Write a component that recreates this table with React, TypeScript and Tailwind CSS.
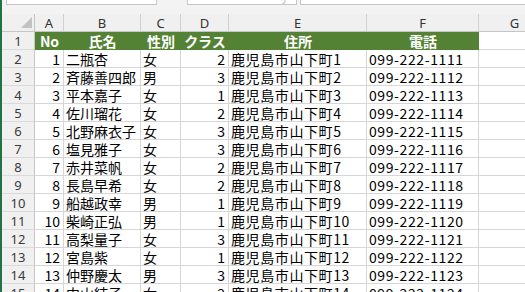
import React from "react";

type Person = { name: string; sex: string; cls: number };

const people: Person[] = [
  { name: "二瓶杏", sex: "女", cls: 2 },
  { name: "斉藤善四郎", sex: "男", cls: 3 },
  { name: "平本嘉子", sex: "女", cls: 1 },
  { name: "佐川瑠花", sex: "女", cls: 2 },
  { name: "北野麻衣子", sex: "女", cls: 3 },
  { name: "塩見雅子", sex: "女", cls: 3 },
  { name: "赤井菜帆", sex: "女", cls: 2 },
  { name: "長島早希", sex: "女", cls: 2 },
  { name: "船越政幸", sex: "男", cls: 1 },
  { name: "柴崎正弘", sex: "男", cls: 1 },
  { name: "高梨量子", sex: "女", cls: 3 },
  { name: "宮島紫", sex: "女", cls: 1 },
  { name: "仲野慶太", sex: "男", cls: 3 },
  { name: "中山結子", sex: "女", cls: 2 },
];

const W = {
  A: "w-[29px]",
  B: "w-[77px]",
  C: "w-[40px]",
  D: "w-[48px]",
  E: "w-[138px]",
  F: "w-[112px]",
  G: "w-[72px]",
};

const cellFont = { fontFamily: '"Noto Sans CJK JP", sans-serif' };
const uiFont = { fontFamily: '"Noto Sans", "Liberation Sans", sans-serif' };

function RowHead({ children }: { children: React.ReactNode }) {
  return (
    <div
      className="w-[33px] shrink-0 h-[18px] bg-[#f0f0f0] border-r border-r-[#c6c6c6] border-b border-b-[#dadada] flex items-center justify-center text-[13px] leading-[16px] text-[#3a3a3a]"
      style={uiFont}
    >
      {children}
    </div>
  );
}

function ColHead({ w, label }: { w: string; label: string }) {
  return (
    <div
      className={`${w} shrink-0 h-[18px] bg-[#f0f0f0] border-r border-[#d0d0d0] border-b border-b-[#c6c6c6] flex items-center justify-center text-[13px] leading-[16px] text-[#333]`}
      style={uiFont}
    >
      {label}
    </div>
  );
}

function Cell({
  w,
  align = "left",
  spacing = "",
  children,
}: {
  w: string;
  align?: "left" | "right";
  spacing?: string;
  children?: React.ReactNode;
}) {
  return (
    <div
      className={`${w} shrink-0 h-[18px] border-r border-b border-[#d6d6d6] flex items-center overflow-hidden whitespace-nowrap text-[14px] leading-[16px] text-black ${spacing} ${
        align === "right" ? "justify-end pr-[3px]" : "justify-start pl-[2px]"
      }`}
      style={cellFont}
    >
      {children}
    </div>
  );
}

function HeadCell({ w, children }: { w: string; children?: React.ReactNode }) {
  return (
    <div
      className={`${w} shrink-0 h-[18px] bg-[#548235] flex items-center justify-center text-[14px] font-bold leading-[16px] text-white overflow-hidden whitespace-nowrap`}
      style={cellFont}
    >
      {children}
    </div>
  );
}

export default function App() {
  return (
    <div className="w-[525px] h-[292px] overflow-hidden flex bg-white">
      <div className="w-[2px] shrink-0 bg-[#217346]" />
      <div className="flex-1 flex flex-col overflow-hidden">
        {/* formula bar strip */}
        <div className="h-[14px] shrink-0 bg-[#f3f3f3] flex items-start">
          <div className="ml-[4px] w-[151px] h-[5px] bg-white border-x border-b border-[#c6c6c6]" />
          <div className="ml-[30px] w-[110px] h-[5px] bg-white border-x border-b border-[#c6c6c6] overflow-hidden relative">
            <span
              className="absolute left-[80px] top-[-12px] text-[14px] italic text-[#c8c8c8] leading-none"
              style={uiFont}
            >
              ✓ fx
            </span>
          </div>
          <div className="ml-[3px] flex-1 h-[5px] bg-white border-l border-b border-[#c6c6c6]" />
        </div>

        {/* column letters */}
        <div className="flex shrink-0">
          <div className="w-[33px] shrink-0 h-[18px] bg-[#f0f0f0] border-r border-[#c6c6c6] border-b border-b-[#c6c6c6] relative">
            <svg className="absolute right-[2px] bottom-[3px]" width="11" height="11" viewBox="0 0 11 11">
              <polygon points="11,0 11,11 0,11" fill="#c2c2c2" />
            </svg>
          </div>
          <ColHead w={W.A} label="A" />
          <ColHead w={W.B} label="B" />
          <ColHead w={W.C} label="C" />
          <ColHead w={W.D} label="D" />
          <ColHead w={W.E} label="E" />
          <ColHead w={W.F} label="F" />
          <ColHead w={W.G} label="G" />
        </div>

        {/* header row */}
        <div className="flex shrink-0">
          <RowHead>1</RowHead>
          <HeadCell w={W.A}>No</HeadCell>
          <HeadCell w={W.B}>氏名</HeadCell>
          <HeadCell w={W.C}>性別</HeadCell>
          <HeadCell w={W.D}>クラス</HeadCell>
          <HeadCell w={W.E}>住所</HeadCell>
          <HeadCell w={W.F}>電話</HeadCell>
          <Cell w={W.G} />
        </div>

        {people.map((p, i) => {
          const n = i + 1;
          return (
            <div className="flex shrink-0" key={n}>
              <RowHead>{n + 1}</RowHead>
              <Cell w={W.A} align="right">{n}</Cell>
              <Cell w={W.B}>{p.name}</Cell>
              <Cell w={W.C}>{p.sex}</Cell>
              <Cell w={W.D} align="right">{p.cls}</Cell>
              <Cell w={W.E} spacing="tracking-[0.6px]">鹿児島市山下町{n}</Cell>
              <Cell w={W.F} spacing="tracking-[0.6px]">099-222-{1110 + n}</Cell>
              <Cell w={W.G} />
            </div>
          );
        })}
      </div>
    </div>
  );
}
